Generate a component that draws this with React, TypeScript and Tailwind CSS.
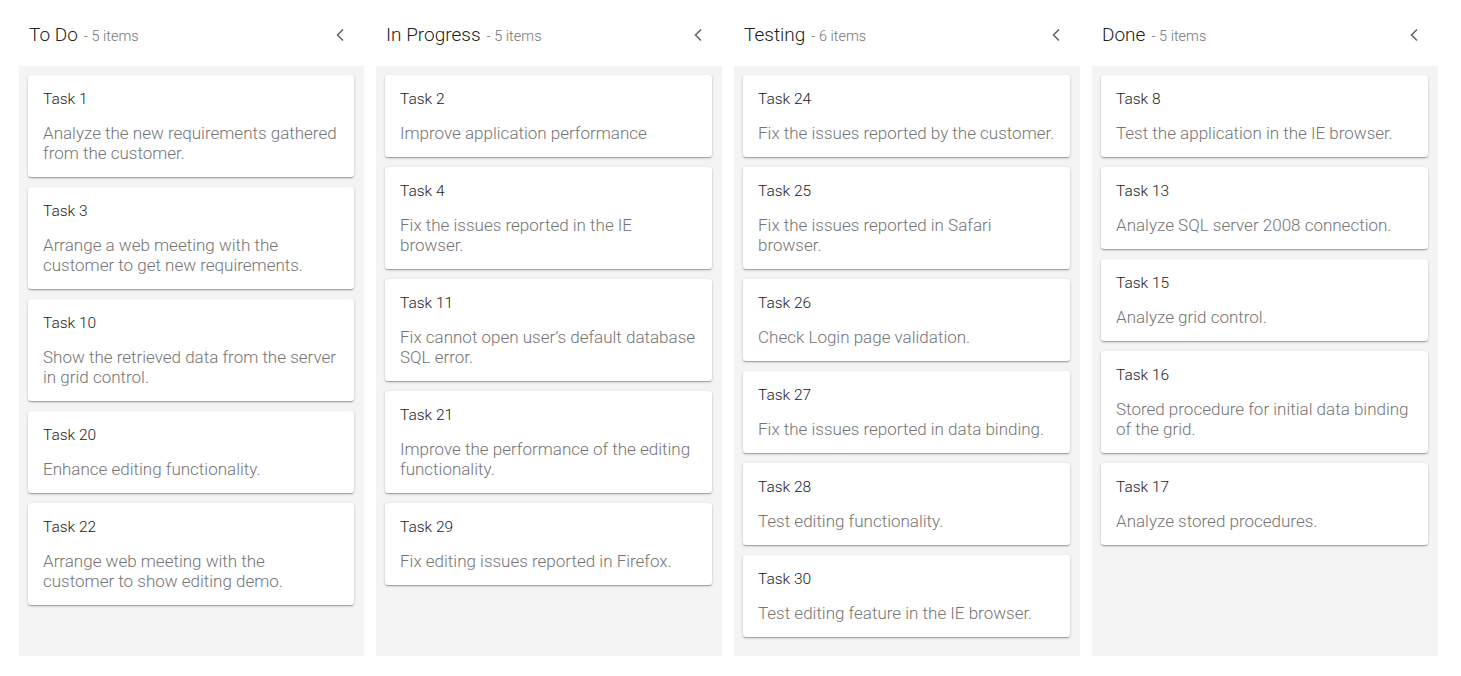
import React from "react";

type Card = { title: string; text: string };
type Column = { name: string; cards: Card[] };

const columns: Column[] = [
  {
    name: "To Do",
    cards: [
      { title: "Task 1", text: "Analyze the new requirements gathered from the customer." },
      { title: "Task 3", text: "Arrange a web meeting with the customer to get new requirements." },
      { title: "Task 10", text: "Show the retrieved data from the server in grid control." },
      { title: "Task 20", text: "Enhance editing functionality." },
      { title: "Task 22", text: "Arrange web meeting with the customer to show editing demo." },
    ],
  },
  {
    name: "In Progress",
    cards: [
      { title: "Task 2", text: "Improve application performance" },
      { title: "Task 4", text: "Fix the issues reported in the IE browser." },
      { title: "Task 11", text: "Fix cannot open user\u2019s default database SQL error." },
      { title: "Task 21", text: "Improve the performance of the editing functionality." },
      { title: "Task 29", text: "Fix editing issues reported in Firefox." },
    ],
  },
  {
    name: "Testing",
    cards: [
      { title: "Task 24", text: "Fix the issues reported by the customer." },
      { title: "Task 25", text: "Fix the issues reported in Safari browser." },
      { title: "Task 26", text: "Check Login page validation." },
      { title: "Task 27", text: "Fix the issues reported in data binding." },
      { title: "Task 28", text: "Test editing functionality." },
      { title: "Task 30", text: "Test editing feature in the IE browser." },
    ],
  },
  {
    name: "Done",
    cards: [
      { title: "Task 8", text: "Test the application in the IE browser." },
      { title: "Task 13", text: "Analyze SQL server 2008 connection." },
      { title: "Task 15", text: "Analyze grid control." },
      { title: "Task 16", text: "Stored procedure for initial data binding of the grid." },
      { title: "Task 17", text: "Analyze stored procedures." },
    ],
  },
];

function Chevron() {
  return (
    <svg width="24" height="24" viewBox="0 0 24 24" fill="none">
      <path d="M15 6.5 L9.5 12 L15 17.5" stroke="#666666" strokeWidth="1.6" />
    </svg>
  );
}

export default function App() {
  return (
    <div
      className="w-[1461px] h-[676px] bg-white flex gap-[12px] pl-[19px]"
      style={{ fontFamily: "Roboto, 'Noto Sans', sans-serif" }}
    >
      {columns.map((col, i) => (
        <div key={col.name} className={(i === 0 ? "w-[345px]" : "w-[346px]") + " flex flex-col"}>
          <div className="h-[66px] flex items-center justify-between pl-[10px] pr-[12px] pt-[4px]">
            <div className="flex items-baseline">
              <span className="text-[19px] font-light text-[#212121]">{col.name}</span>
              <span className="text-[14.5px] font-light text-[#757575] ml-[6px]">- {col.cards.length} items</span>
            </div>
            <Chevron />
          </div>
          <div className="h-[590px] bg-[#f4f4f4] pt-[9px] pl-[9px] pr-[10px] flex flex-col gap-[10px]">
            {col.cards.map((c) => (
              <div
                key={c.title}
                className="bg-white rounded-[3px] px-[15px] py-[14px] flex flex-col gap-[14px] shadow-[0_1px_3px_0_rgba(0,0,0,0.2),0_1px_1px_0_rgba(0,0,0,0.14),0_2px_1px_-1px_rgba(0,0,0,0.12)]"
              >
                <div className="text-[15.5px] font-light leading-[20px] text-[#212121]">{c.title}</div>
                <div className="text-[17px] font-light leading-[20px] text-[#757575]">{c.text}</div>
              </div>
            ))}
          </div>
        </div>
      ))}
    </div>
  );
}
